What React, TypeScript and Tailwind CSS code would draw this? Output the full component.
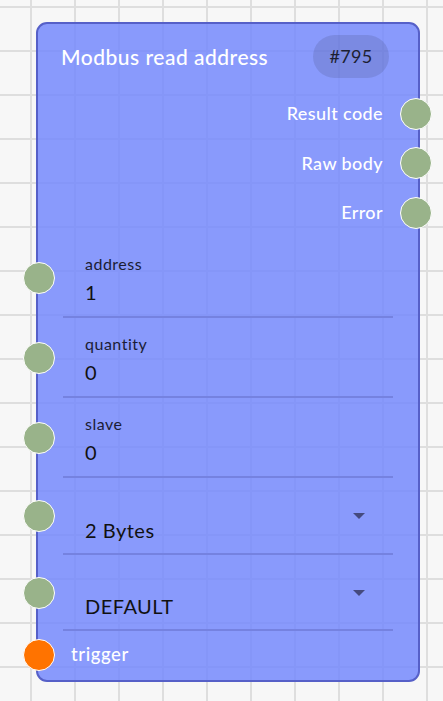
import { ReactNode } from 'react';

const outputs = ['Result code', 'Raw body', 'Error'];

const fields = [
  { label: 'address', value: '1' },
  { label: 'quantity', value: '0' },
  { label: 'slave', value: '0' },
];

function Port({ side, color = 'bg-[#99b38a]' }: { side: 'left' | 'right'; color?: string }) {
  return (
    <span
      className={`absolute top-1/2 -translate-y-1/2 w-[32px] h-[32px] rounded-full border border-white ${color} ${
        side === 'left' ? '-left-[15.5px]' : '-right-[14px]'
      }`}
    />
  );
}

function InputRow({ children, last }: { children: ReactNode; last?: boolean }) {
  return (
    <div className="relative px-[25px]">
      <Port side="left" />
      <div className={last ? '' : 'border-b-2 border-[#7582e0]'}>{children}</div>
    </div>
  );
}

function Caret() {
  return (
    <svg className="absolute right-[28px] top-[35px]" width="12" height="6" viewBox="0 0 12 6">
      <path d="M0 0h12L6 6z" fill="#454a7e" />
    </svg>
  );
}

export default function App() {
  return (
    <div
      className="min-h-[701px] w-full bg-[#f7f7f7] bg-[linear-gradient(to_right,#dedede_2px,transparent_2px),linear-gradient(to_bottom,#dedede_2px,transparent_2px)] bg-[size:44px_44px] bg-[position:30px_6px] pl-[36px] pt-[22px]"
      style={{ fontFamily: 'Lato, "Noto Sans", sans-serif' }}
    >
      <div className="w-[384px] h-[660px] rounded-[11px] border-2 border-[#5660c8] bg-[rgba(117,137,253,0.85)]">
        {/* header */}
        <div className="flex items-center justify-between pl-[23px] pr-[29px] pt-[11px] pb-[11px]">
          <span className="text-[21px] font-medium text-white tracking-[0.5px]">Modbus read address</span>
          <span className="flex items-center justify-center h-[43px] w-[76px] rounded-full bg-black/10 text-[18px] tracking-[0.3px] text-[#1d1f33]">
            #795
          </span>
        </div>

        {/* outputs */}
        <div>
          {outputs.map((o) => (
            <div key={o} className="relative flex items-center justify-end h-[49.5px] pr-[35px]">
              <span className="text-[18px] font-medium text-white tracking-[0.4px]">{o}</span>
              <Port side="right" />
            </div>
          ))}
        </div>

        {/* text fields */}
        {fields.map((f) => (
          <InputRow key={f.label}>
            <div className="pl-[22px] pt-[16px] pb-[10px]">
              <div className="h-[20px] leading-[20px] text-[16px] tracking-[0.5px] text-[#1b1d35]">{f.label}</div>
              <div className="mt-[4px] h-[28px] leading-[28px] text-[20px] text-[#111]">{f.value}</div>
            </div>
          </InputRow>
        ))}

        {/* selects */}
        <InputRow>
          <div className="relative pl-[22px] pt-[38px] pb-[9px]">
            <div className="h-[28px] leading-[28px] text-[20px] tracking-[0.5px] text-[#111]">2 Bytes</div>
            <Caret />
          </div>
        </InputRow>
        <InputRow>
          <div className="relative pl-[22px] pt-[37px] pb-[9px]">
            <div className="h-[28px] leading-[28px] text-[20px] tracking-[0.5px] text-[#111]">DEFAULT</div>
            <Caret />
          </div>
        </InputRow>

        {/* trigger */}
        <div className="relative flex items-center h-[49.5px] pl-[33px]">
          <Port side="left" color="bg-[#ff7300]" />
          <span className="text-[18.5px] font-medium text-white tracking-[0.6px]">trigger</span>
        </div>
      </div>
    </div>
  );
}
